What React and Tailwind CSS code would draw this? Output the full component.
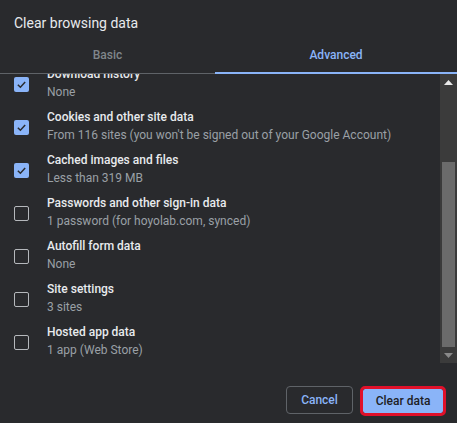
import React from 'react';

const items = [
  { label: 'Download history', sub: 'None', checked: true },
  { label: 'Cookies and other site data', sub: "From 116 sites (you won't be signed out of your Google Account)", checked: true },
  { label: 'Cached images and files', sub: 'Less than 319 MB', checked: true },
  { label: 'Passwords and other sign-in data', sub: '1 password (for hoyolab.com, synced)', checked: false },
  { label: 'Autofill form data', sub: 'None', checked: false },
  { label: 'Site settings', sub: '3 sites', checked: false },
  { label: 'Hosted app data', sub: '1 app (Web Store)', checked: false },
];

const Checkbox = ({ checked }) =>
  checked ? (
    <div className="h-[15px] w-[15px] rounded-[2px] bg-[#8ab4f8] flex items-center justify-center">
      <svg width="11" height="11" viewBox="0 0 12 12" fill="none">
        <path d="M2 6.2 L4.8 9 L10 3.2" stroke="#292a2d" strokeWidth="1.6" />
      </svg>
    </div>
  ) : (
    <div className="h-[15px] w-[15px] rounded-[2px] border-[1.5px] border-[#b5b8bc]" />
  );

const App = () => {
  return (
    <div
      className="w-[457px] h-[423px] bg-[#292a2d] flex flex-col overflow-hidden"
      style={{ fontFamily: 'Roboto, "Liberation Sans", sans-serif' }}
    >
      {/* Title */}
      <div className="pl-[14px] pt-[13px] h-[36px] text-[14px] leading-[20px] text-[#e8eaed]">
        Clear browsing data
      </div>

      {/* Tabs */}
      <div className="flex h-[38px] border-b border-[#5f6368] relative">
        <div className="w-[215px] flex items-center justify-center text-[12px] font-medium text-[#80868b]">
          Basic
        </div>
        <div className="flex-1 flex items-center justify-center text-[12px] font-medium text-[#8ab4f8] relative">
          Advanced
          <div className="absolute left-0 right-0 bottom-[-1px] h-[2px] bg-[#8ab4f8]" />
        </div>
      </div>

      {/* Scroll list */}
      <div className="flex h-[289px]">
        <div className="flex-1 overflow-hidden">
          <div className="-mt-[13px]">
            {items.map((it) => (
              <div key={it.label} className="flex h-[43px] pt-[4px]">
                <div className="w-[47px] pl-[14px] pt-[12px]">
                  <Checkbox checked={it.checked} />
                </div>
                <div className="flex flex-col">
                  <span className="text-[12px] leading-[18px] font-medium text-[#e8eaed] whitespace-nowrap">{it.label}</span>
                  <span className="text-[12px] leading-[18px] text-[#9aa0a6] whitespace-nowrap">{it.sub}</span>
                </div>
              </div>
            ))}
          </div>
        </div>
        {/* Scrollbar */}
        <div className="w-[17px] bg-[#3b3b3b] flex flex-col">
          <div className="h-[17px] flex items-center justify-center">
            <svg width="9" height="5" viewBox="0 0 9 5">
              <path d="M0 5 L4.5 0 L9 5 Z" fill="#e8e8e8" />
            </svg>
          </div>
          <div className="h-[71px]" />
          <div className="mx-[2px] h-[185px] bg-[#6b6b6b]" />
          <div className="flex-1 flex items-center justify-center">
            <svg width="9" height="5" viewBox="0 0 9 5">
              <path d="M0 0 L9 0 L4.5 5 Z" fill="#8a8a8a" />
            </svg>
          </div>
        </div>
      </div>

      {/* Footer */}
      <div className="flex justify-end items-start gap-[10px] pt-[23px] pr-[14px]">
        <button className="h-[28px] w-[67px] rounded-[4px] border border-[#5f6368] text-[12px] font-medium text-[#8ab4f8]">
          Cancel
        </button>
        <button className="h-[24px] w-[80px] mt-[3px] rounded-[2px] bg-[#8ab4f8] text-[12px] font-medium text-[#202124] outline-[3px] outline-[#e0102a] outline outline-offset-0">
          Clear data
        </button>
      </div>
    </div>
  );
};

export default App;
